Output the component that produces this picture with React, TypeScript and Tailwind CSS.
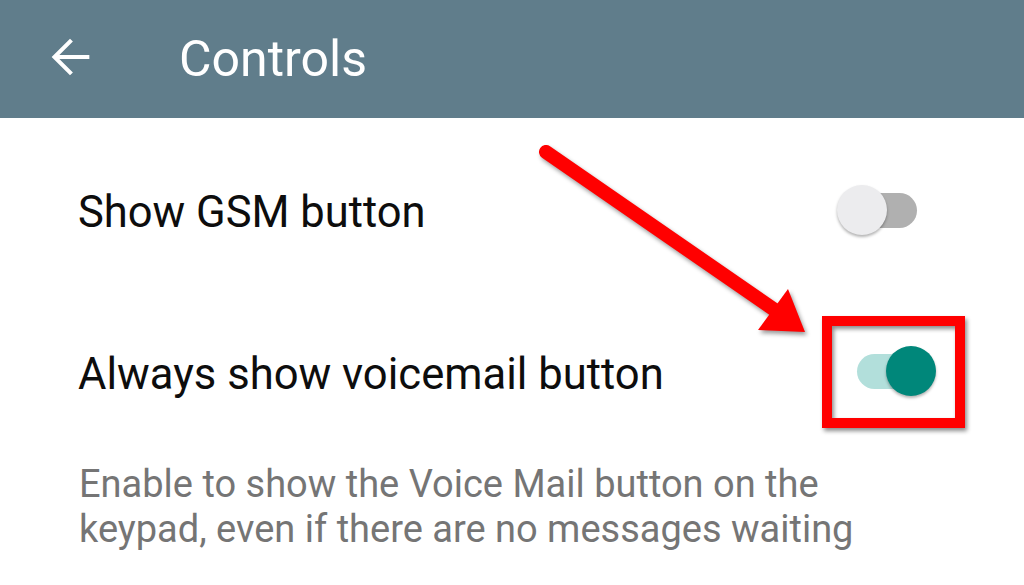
import React from "react";

function Toggle({ on }: { on: boolean }) {
  return (
    <div className="relative w-[99px] h-[50px] flex items-center shrink-0">
      <div
        className={
          "absolute left-[20px] w-[60px] h-[35px] rounded-full " +
          (on ? "bg-[#b2dfdb]" : "bg-[#b0b0b0]")
        }
      />
      <div
        className={
          "absolute top-0 w-[50px] h-[50px] rounded-full shadow-[0_2px_3px_rgba(0,0,0,0.3)] " +
          (on ? "left-[49px] bg-[#00877a]" : "left-0 bg-[#ececee]")
        }
      />
    </div>
  );
}

export default function App() {
  return (
    <div
      className="relative w-[1024px] h-[585px] bg-white overflow-hidden"
      style={{ fontFamily: "Roboto, 'Noto Sans', sans-serif" }}
    >
      <header className="h-[118px] bg-[#607d8b] flex items-center pl-[41px]">
        <svg
          viewBox="0 0 24 24"
          className="w-[58px] h-[58px] -mt-[4px] shrink-0"
          fill="#ffffff"
        >
          <path d="M20 11.2H7.6l5.6-5.6L12 4.4l-7.6 7.6 7.6 7.6 1.2-1.2-5.6-5.6H20v-1.6z" />
        </svg>
        <h1 className="ml-[80px] text-[50px] leading-none text-white font-normal">
          Controls
        </h1>
      </header>

      <div className="flex flex-col">
        <div className="h-[188px] flex items-center justify-between pl-[78px] pr-[88px]">
          <span className="text-[43.5px] leading-[52px] text-[#0d0d0d] mt-[2px]">
            Show GSM button
          </span>
          <div className="mb-[4px]">
            <Toggle on={false} />
          </div>
        </div>
        <div className="h-[134px] flex items-center justify-between pl-[78px] pr-[88px]">
          <span className="text-[43.6px] leading-[52px] text-[#0d0d0d] mt-[4px]">
            Always show voicemail button
          </span>
          <div className="mb-[4px]">
            <Toggle on={true} />
          </div>
        </div>
        <p className="pt-[22px] pl-[79px] w-[900px] text-[38px] leading-[45px] text-[#757575]">
          Enable to show the Voice Mail button on the
          <br />
          keypad, even if there are no messages waiting
        </p>
      </div>

      {/* red highlight box */}
      <div className="absolute left-[822px] top-[316px] w-[143px] h-[112px] border-[10px] border-[#ff0000] drop-shadow-[2px_3px_2px_rgba(0,0,0,0.45)]" />

      {/* red arrow */}
      <svg
        className="absolute left-0 top-0 pointer-events-none drop-shadow-[2px_3px_2px_rgba(0,0,0,0.4)]"
        width="1024"
        height="585"
        viewBox="0 0 1024 585"
      >
        <line
          x1="546"
          y1="152"
          x2="782"
          y2="315"
          stroke="#ff0000"
          strokeWidth="14"
          strokeLinecap="round"
        />
        <polygon points="805,332 788,289 758,330" fill="#ff0000" />
      </svg>
    </div>
  );
}
